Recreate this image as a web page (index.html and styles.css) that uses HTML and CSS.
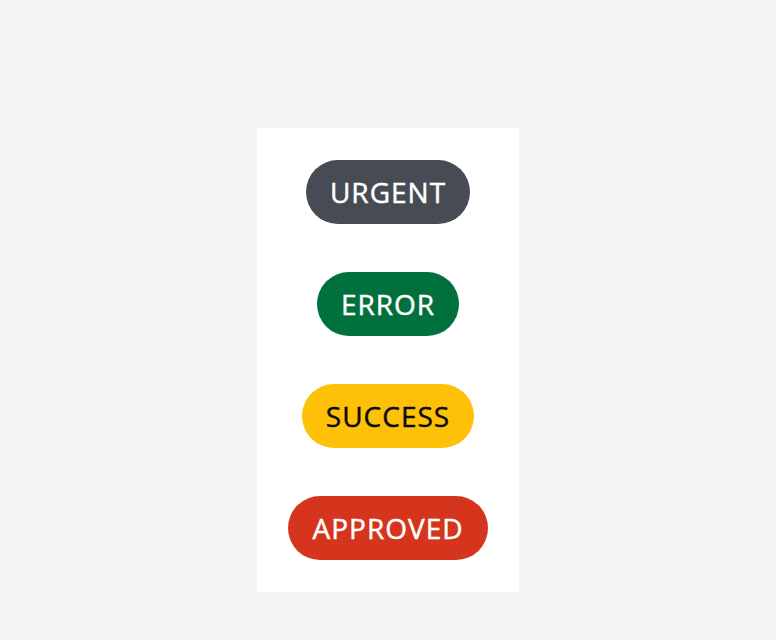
FILE: index.html
```html
<!DOCTYPE html>
<html>
<head>
<meta charset="utf-8">
<link rel="stylesheet" href="styles.css">
</head>
<body>
<div class="card">
  <span class="pill pill-urgent">URGENT</span>
  <span class="pill pill-error">ERROR</span>
  <span class="pill pill-success">SUCCESS</span>
  <span class="pill pill-approved">APPROVED</span>
</div>
</body>
</html>
```
FILE: styles.css
```css
html, body {
  margin: 0;
  padding: 0;
}
body {
  background: #f4f4f4;
  font-family: "Open Sans", sans-serif;
  display: flex;
  justify-content: center;
  padding-top: 128px;
  min-height: 640px;
  box-sizing: border-box;
}
.card {
  width: 262px;
  box-sizing: border-box;
  background: #fff;
  border-radius: 4px;
  padding: 32px 0;
  display: flex;
  flex-direction: column;
  align-items: center;
  gap: 48px;
  align-self: flex-start;
}
.pill {
  height: 64px;
  box-sizing: border-box;
  display: flex;
  align-items: center;
  justify-content: center;
  padding: 0 24px;
  border-radius: 32px;
  font-size: 28px;
  font-weight: 400;
  letter-spacing: 1px;
  -webkit-text-stroke: 0.45px currentColor;
  color: #fff;
}
.pill-urgent { background: #474c54; }
.pill-error { background: #00703c; }
.pill-success { background: #ffc107; color: #0b0c0c; }
.pill-approved { background: #d4351c; }
```
